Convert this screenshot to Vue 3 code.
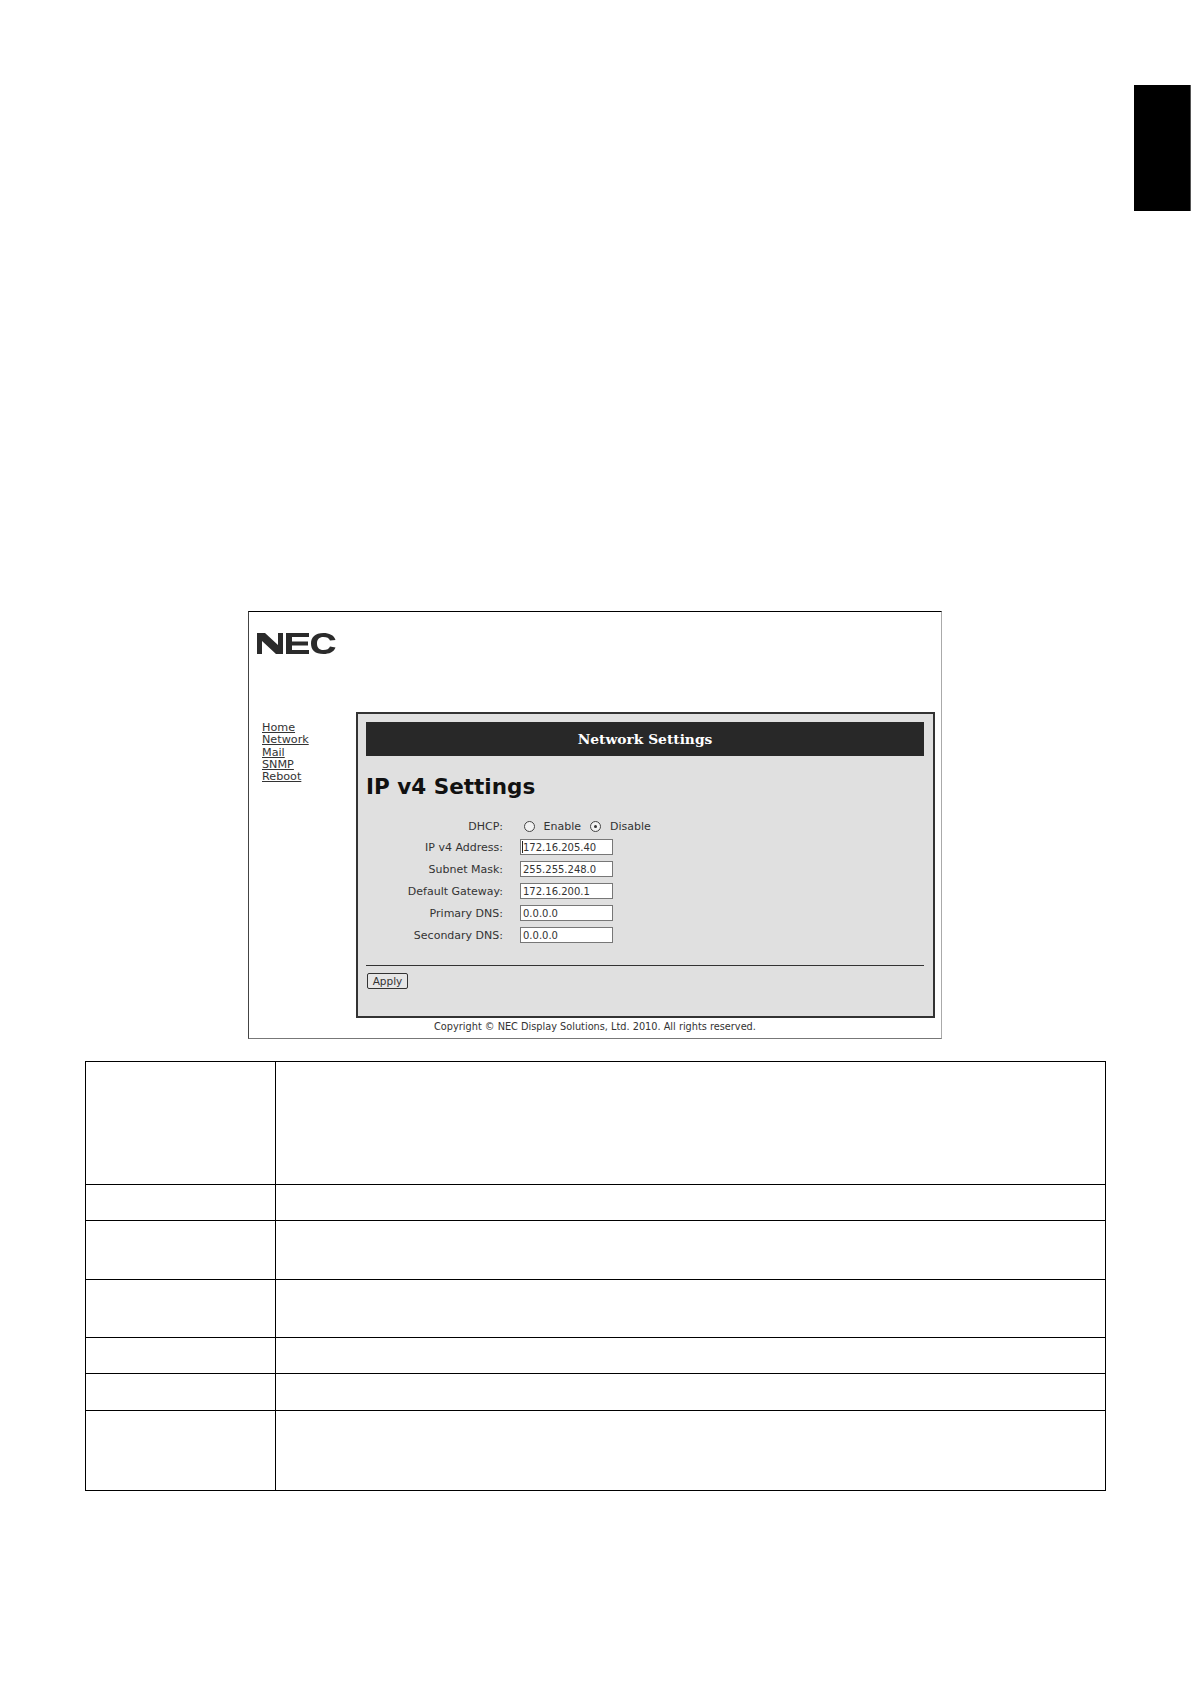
<script setup>
const nav = ['Home', 'Network', 'Mail', 'SNMP', 'Reboot']
const fields = [
  { label: 'IP v4 Address:', value: '172.16.205.40', caret: true },
  { label: 'Subnet Mask:', value: '255.255.248.0' },
  { label: 'Default Gateway:', value: '172.16.200.1' },
  { label: 'Primary DNS:', value: '0.0.0.0' },
  { label: 'Secondary DNS:', value: '0.0.0.0' }
]
const rows = [123, 36, 59, 58, 36, 37, 80]
</script>

<template>
  <div class="page">
    <div class="tab"></div>

    <figure class="shot">
      <svg class="logo" viewBox="0 0 79 21" width="79" height="21" role="img" aria-label="NEC">
        <path d="M0 0H8L21 12V0H26V21H19L5 8V21H0Z" />
        <path d="M29 0H52V4H35V8.5H51V12.5H35V17H52V21H29Z" />
        <path d="M78.5 7C77 2 72 0 66.5 0C58 0 54 4.5 54 10.5C54 17 58 21 66.5 21C72 21 77 19 78.5 14.5L73 13.5C72 16 70 17 66.5 17C62 17 60 14.5 60 10.5C60 6.5 62 4 66.5 4C70 4 72 5 73 7.5Z" />
      </svg>

      <div class="body">
        <nav class="nav">
          <a v-for="item in nav" :key="item" href="#">{{ item }}</a>
        </nav>

        <section class="panel">
          <header class="bar">Network Settings</header>
          <h1 class="title">IP v4 Settings</h1>

          <div class="form">
            <span class="label">DHCP:</span>
            <div class="radios">
              <span class="radio"></span>
              <span class="opt">Enable</span>
              <span class="radio on"></span>
              <span class="opt">Disable</span>
            </div>
            <template v-for="f in fields" :key="f.label">
              <span class="label">{{ f.label }}</span>
              <input class="input" :class="{ caret: f.caret }" :value="f.value" readonly />
            </template>
          </div>

          <hr class="rule" />
          <button class="apply" type="button">Apply</button>
        </section>
      </div>

      <figcaption class="copy">Copyright © NEC Display Solutions, Ltd. 2010. All rights reserved.</figcaption>
    </figure>

    <div class="table">
      <template v-for="(h, i) in rows" :key="i">
        <div class="cell first" :style="{ height: h + 'px' }"></div>
        <div class="cell" :style="{ height: h + 'px' }"></div>
      </template>
    </div>
  </div>
</template>

<style scoped>
.page {
  width: 1191px;
  height: 1684px;
  box-sizing: border-box;
  padding-top: 85px;
  background: #fff;
  font-family: "DejaVu Sans", Verdana, sans-serif;
  color: #333;
  overflow: hidden;
}
.tab {
  width: 57px;
  height: 126px;
  box-sizing: border-box;
  margin-left: auto;
  background: #000;
  border-right: 1px solid #555;
}
.shot {
  position: relative;
  box-sizing: border-box;
  width: 694px;
  height: 428px;
  margin: 400px 0 0 248px;
  padding: 21px 0 0 8px;
  background: #fff;
  border-top: 1px solid #000;
  border-left: 1px solid #444;
  border-right: 1px solid #aaa;
  border-bottom: 1px solid #777;
}
.logo {
  display: block;
  fill: #2b2b2b;
}
.body {
  display: flex;
  margin-top: 58px;
}
.nav {
  display: flex;
  flex-direction: column;
  width: 99px;
  padding: 10px 0 0 5px;
  box-sizing: border-box;
  font-size: 11.2px;
  line-height: 12.3px;
}
.nav a {
  color: #333;
  text-decoration: underline;
}
.panel {
  box-sizing: border-box;
  width: 579px;
  height: 306px;
  padding: 8px 9px 8px 8px;
  background: #e0e0e0;
  border: 2px solid #333;
}
.bar {
  height: 34px;
  background: #282828;
  color: #fff;
  font-family: "DejaVu Serif", serif;
  font-weight: 700;
  font-size: 13.8px;
  line-height: 34px;
  text-align: center;
}
.title {
  margin: 17px 0 0;
  font-size: 21.5px;
  line-height: 28px;
  font-weight: 700;
  color: #111;
}
.form {
  display: grid;
  grid-template-columns: 137px 1fr;
  column-gap: 17px;
  margin-top: 15px;
  font-size: 11px;
  align-items: center;
}
.label {
  text-align: right;
  color: #333;
}
.radios {
  display: flex;
  align-items: center;
  height: 20px;
  padding-left: 3.5px;
}
.radio {
  position: relative;
  box-sizing: border-box;
  width: 11px;
  height: 11px;
  border: 1px solid #444;
  border-radius: 50%;
  background: #f2f2f2;
}
.radio.on::after {
  content: "";
  position: absolute;
  left: 3px;
  top: 3px;
  width: 3px;
  height: 3px;
  border-radius: 50%;
  background: #333;
}
.opt {
  margin: 0 9px 0 9px;
}
.input {
  display: block;
  box-sizing: border-box;
  width: 93px;
  height: 16px;
  margin: 3px 0;
  padding: 0 2px;
  border: 1px solid #777;
  background: #fff;
  color: #333;
  font: 10px "DejaVu Sans", Verdana, sans-serif;
  outline: none;
}
.input.caret {
  background: linear-gradient(#222, #222) 1px 1px / 1px 12px no-repeat #fff;
}
.rule {
  margin: 19px 0 0;
  border: 0;
  border-top: 1px solid #333;
}
.apply {
  display: block;
  box-sizing: border-box;
  width: 41px;
  height: 16px;
  margin: 7px 0 0 1px;
  padding: 0;
  border: 1px solid #333;
  border-radius: 2px;
  background: #e6e6e6;
  color: #333;
  font: 10.5px/14px "DejaVu Sans", Verdana, sans-serif;
}
.copy {
  position: absolute;
  left: 0;
  right: 0;
  top: 409px;
  font-size: 9.75px;
  line-height: 12px;
  text-align: center;
  color: #333;
}
.table {
  display: grid;
  grid-template-columns: 190px 830px;
  width: 1020px;
  margin: 22px 0 0 85px;
  border-top: 1px solid #000;
  border-left: 1px solid #000;
  box-sizing: content-box;
}
.cell {
  box-sizing: border-box;
  border-right: 1px solid #000;
  border-bottom: 1px solid #000;
}
</style>
